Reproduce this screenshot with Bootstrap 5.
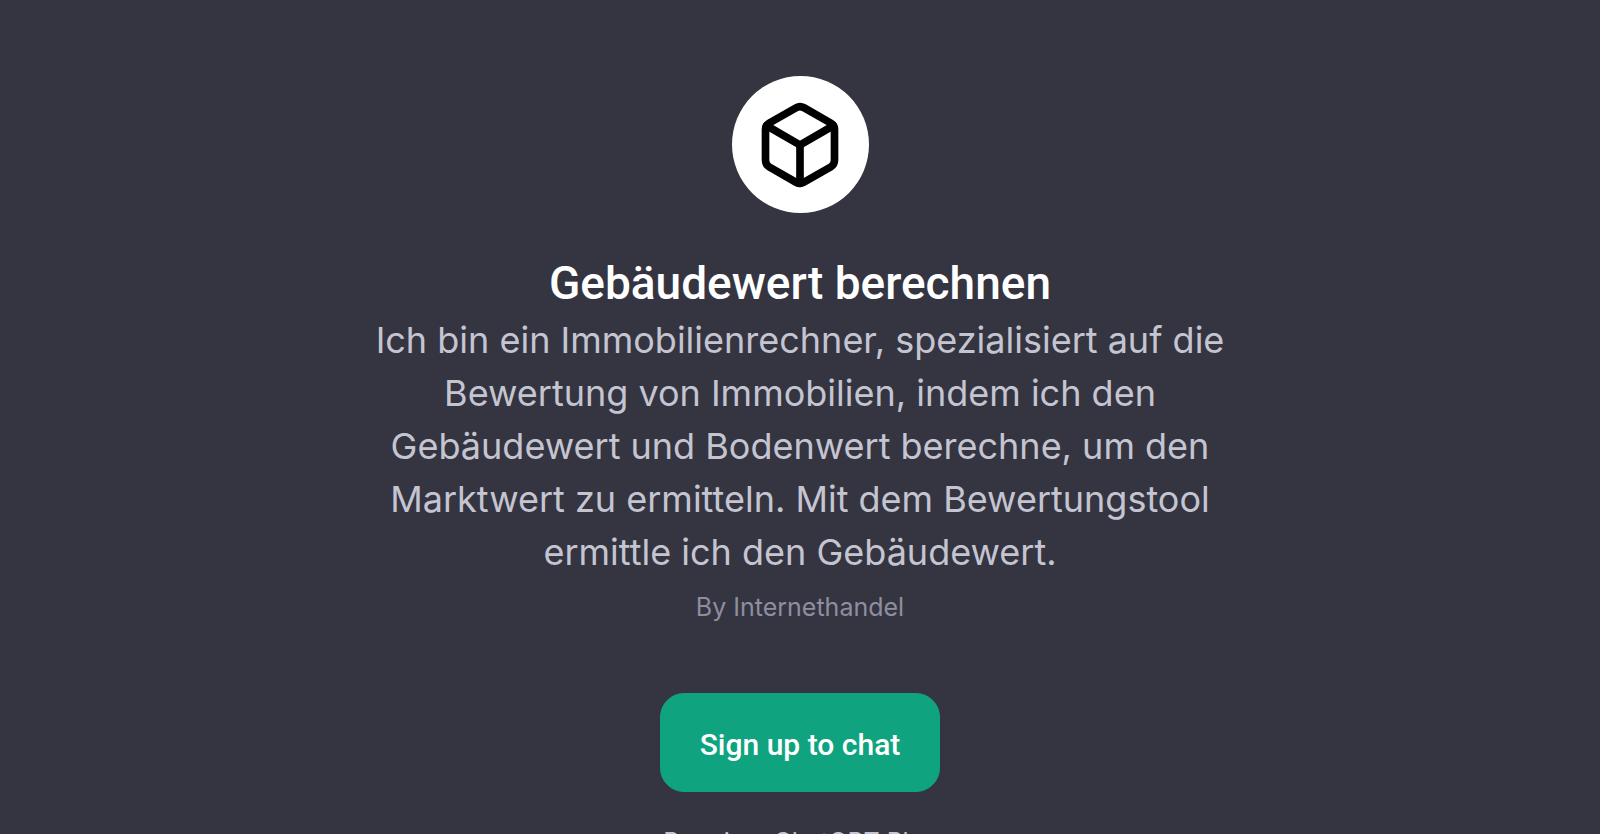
<!DOCTYPE html>
<html lang="de">
<head>
<meta charset="utf-8">
<meta name="viewport" content="width=device-width, initial-scale=1">
<title>Gebäudewert berechnen</title>
<link href="https://cdn.jsdelivr.net/npm/bootstrap@5.3.0/dist/css/bootstrap.min.css" rel="stylesheet">
<style>
  html { scrollbar-width: none; }
  html::-webkit-scrollbar { display: none; }
  body { background: #343541; color: #fff; font-family: Inter, "Liberation Sans", sans-serif; }
  .gpt-page { padding: 76px 16px 32px; }
  .gpt-logo { width: 137px; height: 137px; margin-bottom: 40px; }
  .gpt-logo svg { width: 92px; height: 92px; }
  .gpt-title { font: 500 46px/61px Roboto, sans-serif; }
  .gpt-text { max-width: 872px; font-size: 36px; line-height: 53px; color: #c5c5d2; margin-bottom: 5px; }
  .gpt-author { font-size: 25px; line-height: 46px; color: #8e8ea0; margin-bottom: 63px; }
  .gpt-signup {
    --bs-btn-color: #fff; --bs-btn-bg: #10a37f; --bs-btn-border-color: #10a37f;
    --bs-btn-hover-color: #fff; --bs-btn-hover-bg: #1a7f64; --bs-btn-hover-border-color: #1a7f64;
    --bs-btn-border-radius: 24px;
    min-width: 280px; padding: 29px 36px 25px;
    font: 500 30px/43px Roboto, sans-serif;
  }
  .gpt-note { font-size: 25px; line-height: 38px; color: #c5c5d2; margin-top: 31px; }
</style>
</head>
<body>
<main class="gpt-page d-flex flex-column align-items-center text-center">
  <div class="gpt-logo rounded-circle bg-white d-flex align-items-center justify-content-center">
    <svg viewBox="0 0 24 24" fill="none" stroke="#000" stroke-width="2" stroke-linecap="round" stroke-linejoin="round" aria-hidden="true">
      <path d="M21 16V8a2 2 0 0 0-1-1.73l-7-4a2 2 0 0 0-2 0l-7 4A2 2 0 0 0 3 8v8a2 2 0 0 0 1 1.73l7 4a2 2 0 0 0 2 0l7-4A2 2 0 0 0 21 16z"/>
      <polyline points="3.27 6.96 12 12.01 20.73 6.96"/>
      <line x1="12" y1="22" x2="12" y2="12"/>
    </svg>
  </div>
  <h1 class="gpt-title mb-0">Gebäudewert berechnen</h1>
  <p class="gpt-text">Ich bin ein Immobilienrechner, spezialisiert auf die Bewertung von Immobilien, indem ich den Gebäudewert und Bodenwert berechne, um den Marktwert zu ermitteln. Mit dem Bewertungstool ermittle ich den Gebäudewert.</p>
  <p class="gpt-author">By Internethandel</p>
  <button type="button" class="btn gpt-signup">Sign up to chat</button>
  <p class="gpt-note mb-0">Requires ChatGPT Plus</p>
</main>
<script src="https://cdn.jsdelivr.net/npm/bootstrap@5.3.0/dist/js/bootstrap.bundle.min.js"></script>
</body>
</html>
